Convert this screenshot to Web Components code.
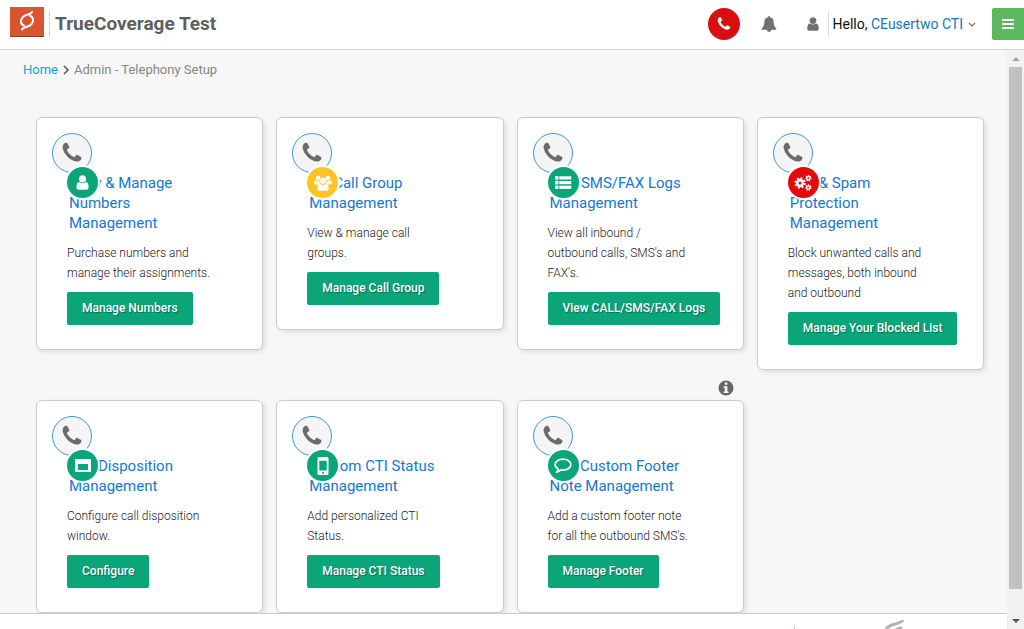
<!DOCTYPE html>
<html lang="en">
<head>
<meta charset="utf-8">
<title>Admin - Telephony Setup</title>
<style>
html, body { margin: 0; height: 100%; }
body { font-family: Roboto, "Liberation Sans", sans-serif; color: #333; background: #f7f7f7; overflow: hidden; }
</style>
</head>
<body>
<telephony-app></telephony-app>
<script>
const PHONE = '<path d="M1600 1240q0 27-10 70.5t-21 68.5q-21 50-122 106-94 51-186 51-27 0-52.5-3.5t-57.5-12.5-47.5-14.5-55.5-20.5-49-18q-98-35-175-83-128-79-264.5-215.5t-215.5-264.5q-48-77-83-175-3-9-18-49t-20.5-55.5-14.5-47.5-12.5-57.5-3.5-52.5q0-92 51-186 56-101 106-122 25-11 68.5-21t70.5-10q14 0 21 3 18 6 53 76 11 19 30 54t35 63.5 31 53.5q3 4 17.5 25t21.5 35.5 7 28.5q0 20-28.5 50t-62 55-62 53-28.5 46q0 9 5 22.5t8.500 20.5 14 24 11.5 19q76 137 174 235t235 174q2 1 19 11.5t24 14 20.5 8.500 22.5 5q18 0 46-28.500t53-62 55-62 50-28.500q14 0 28.500 7t35.500 21.500 25 17.500q25 15 53.500 31t63.500 35 54 30q70 35 76 53 3 7 3 21z"/>';
const USER = '<path d="M1536 1399q0 109-62.5 187t-150.5 78h-854q-88 0-150.5-78t-62.5-187q0-85 8.5-160.5t31.5-152 58.5-131 94-89 134.5-34.5q131 128 313 128t313-128q76 0 134.5 34.5t94 89 58.5 131 31.5 152 8.5 160.5zm-256-887q0 159-112.5 271.5t-271.5 112.5-271.5-112.5-112.5-271.5 112.5-271.5 271.5-112.5 271.5 112.5 112.5 271.5z"/>';
const gear = (x, y, r, w, teeth) => {
  const dash = 2 * Math.PI * r / (teeth * 2);
  return `<g fill="none" stroke="currentColor"><circle cx="${x}" cy="${y}" r="${r - w * 0.6}" stroke-width="${w}"/><circle cx="${x}" cy="${y}" r="${r}" stroke-width="${w}" stroke-dasharray="${dash}"/></g>`;
};
const ICONS = {
  phone: [1792, PHONE],
  user: [1792, USER],
  bell: [1792, '<path d="M912 1696q0-16-16-16-59 0-101.5-42.5t-42.5-101.5q0-16-16-16t-16 16q0 73 51.5 124.5t124.5 51.5q16 0 16-16zm816-288q0 52-38 90t-90 38h-448q0 106-75 181t-181 75-181-75-75-181h-448q-52 0-90-38t-38-90q50-42 91-88t85-119.5 74.5-158.5 50-206 19.5-260q0-152 117-282.5t307-158.5q-8-19-8-39 0-40 28-68t68-28 68 28 28 68q0 20-8 39 190 28 307 158.5t117 282.5q0 139 19.5 260t50 206 74.5 158.5 85 119.5 91 88z"/>'],
  menu: [16, '<rect x="2" y="3" width="12" height="2"/><rect x="2" y="7" width="12" height="2"/><rect x="2" y="11" width="12" height="2"/>'],
  group: [18, '<circle cx="4" cy="4" r="2.4"/><circle cx="14" cy="4" r="2.4"/><path d="M0 9.500q0-3.300 2-3.300 2 1.300 3.500.6-.6 2 .8 3.600H2Q0 10.500 0 9.500zM18 9.500q0-3.300-2-3.300-2 1.300-3.500.6.6 2-.8 3.600H16q2 .1 2-.9z"/><circle cx="9" cy="6.800" r="3.200"/><path d="M3.300 14.500q0-4.500 2.600-4.500 3.100 2 6.200 0 2.600 0 2.600 4.500 0 2.300-2.200 2.300h-7q-2.200 0-2.200-2.300z"/>'],
  list: [18, '<rect x="1" y="2" width="3.500" height="3.700" rx="1"/><rect x="1" y="6.700" width="3.500" height="3.700" rx="1"/><rect x="1" y="11.400" width="3.500" height="3.700" rx="1"/><rect x="5.300" y="2.300" width="12" height="3.200"/><rect x="5.300" y="7" width="12" height="3.200"/><rect x="5.300" y="11.700" width="12" height="3.200"/>'],
  cogs: [18, gear(6, 9, 4.4, 2.6, 8) + gear(14.3, 4.2, 2.5, 1.5, 7) + gear(14.3, 13.6, 2.5, 1.5, 7)],
  window: [18, '<path fill-rule="evenodd" d="M1 2h16v13H1zM4 7v6h10V7z"/>'],
  mobile: [18, '<path fill-rule="evenodd" d="M5 0h8q1.500 0 1.500 1.500v15q0 1.500-1.500 1.500H5q-1.500 0-1.500-1.500v-15Q3.500 0 5 0zM5.300 3.800v9.700h7.400V3.800zM9 14.900a1 1 0 1 0 0 2 1 1 0 0 0 0-2z"/>'],
  comment: [18, '<path fill="none" stroke="currentColor" stroke-width="1.700" stroke-linejoin="round" d="M9 2.200c4.500 0 7.900 2.400 7.900 5.400S13.500 13.100 9 13.100q-1 0-1.900-.15Q5.100 14.700 2.500 15.100q1.400-1.200 1.700-3.200C2.200 10.900 1.100 9.300 1.100 7.600 1.100 4.600 4.500 2.200 9 2.200z"/>'],
  info: [16, '<path fill-rule="evenodd" d="M8 .5a7.500 7.500 0 1 0 0 15 7.500 7.500 0 0 0 0-15zM6.700 2.600h2.700v2.100H6.700zM5.600 6.200h3.800v5.200h1.200v1.700h-5v-1.700h1.200V7.900H5.600z"/>'],
  right: [10, '<path fill="none" stroke="currentColor" stroke-width="1.500" d="M3 1l4 4-4 4"/>'],
  down: [10, '<path fill="none" stroke="currentColor" stroke-width="1.200" d="M2 4l3 3 3-3"/>']
};
const define = (name, markup, setup) => {
  const template = document.createElement('template');
  template.innerHTML = markup;
  customElements.define(name, class extends HTMLElement {
    constructor() {
      super();
      this.attachShadow({ mode: 'open' }).append(template.content.cloneNode(true));
    }
    connectedCallback() { if (setup) setup(this, this.shadowRoot); }
  });
};

define('ui-icon', `
<style>
:host { display: block; flex: none; width: 16px; height: 16px; }
svg { display: block; width: 100%; height: 100%; fill: currentColor; }
</style>
<svg aria-hidden="true"></svg>`, (host, root) => {
  const [size, shape] = ICONS[host.getAttribute('name')];
  const svg = root.querySelector('svg');
  svg.setAttribute('viewBox', `0 0 ${size} ${size}`);
  svg.innerHTML = shape;
});

define('brand-logo', `
<style>
:host { display: block; width: 34px; height: 30px; background: #db5430; box-sizing: border-box; border-bottom: 1px solid #8f3d2a; }
svg { display: block; }
</style>
<svg width="34" height="29" viewBox="0 0 34 29" fill="none" stroke="#fff" stroke-width="2" stroke-linecap="round" role="img" aria-label="Logo">
<path d="M22 5q-1 2-4 2.500c-5 1-7.500 4.500-7 7.500q.5 3 3 3.500"/><path d="M12 22.500q1-2 4-2.500c5-1 7.500-4.500 7-7.500q-.5-3-3-3.500"/>
</svg>`);

define('app-header', `
<style>
:host { display: flex; align-items: center; height: 48px; padding-bottom: 1px; background: #fff; border-bottom: 1px solid #d3d3d3; }
brand-logo { margin: 0 5px 4px 10px; }
h1 { margin: 0; padding-left: 5px; border-left: 1px solid #d8d8d8; font-size: 19px; line-height: 26px; font-weight: 700; color: #5f5f5f; }
.end { display: flex; align-items: center; margin-left: auto; color: #707070; }
button { border: 0; padding: 0; background: none; color: inherit; font: inherit; display: flex; align-items: center; justify-content: center; }
.call { width: 32px; height: 32px; border-radius: 50%; background: #d90e11; color: #fff; margin-right: 21px; }
.bell { margin-right: 28px; }
.person { margin-right: 7px; }
.hello { display: flex; align-items: center; gap: 4px; border-left: 1px solid #d5dde2; padding-left: 4px; height: 26px; font-size: 14px; color: #111; margin-right: 15px; white-space: nowrap; }
a { color: #1a74b8; text-decoration: none; }
.hello ui-icon { width: 10px; height: 10px; color: #a0605a; }
.menu { width: 32px; height: 32px; border-radius: 2px 0 0 2px; background: #5cb85c; color: #fff; }
</style>
<brand-logo></brand-logo>
<h1>TrueCoverage Test</h1>
<div class="end">
  <button class="call" aria-label="Call"><ui-icon name="phone"></ui-icon></button>
  <button class="bell" aria-label="Notifications"><ui-icon name="bell"></ui-icon></button>
  <button class="person" aria-label="Profile"><ui-icon name="user"></ui-icon></button>
  <div class="hello"><span>Hello, <a href="#user">CEusertwo CTI</a></span><ui-icon name="down"></ui-icon></div>
  <button class="menu" aria-label="Menu"><ui-icon name="menu"></ui-icon></button>
</div>`);

define('bread-crumb', `
<style>
:host { display: flex; align-items: center; gap: 3px; font-size: 13px; line-height: 20px; color: #858585; }
a { color: #199be0; text-decoration: none; }
ui-icon { width: 10px; height: 10px; color: #555; }
</style>
<a href="#home">Home</a><ui-icon name="right"></ui-icon><slot></slot>`);

define('setup-card', `
<style>
:host { display: block; position: relative; box-sizing: border-box; padding: 15px 15px 24px; background: #fff; border: 1px solid #ccc; border-radius: 6px; box-shadow: 2px 2px 5px rgba(0,0,0,.1); }
.phone { display: flex; align-items: center; justify-content: center; box-sizing: border-box; width: 40px; height: 40px; border: 1px solid #3c9ad8; border-radius: 50%; background: #f5f5f5; color: #6b6b6b; }
.phone ui-icon { width: 24px; height: 24px; }
.badge { position: absolute; left: 30px; top: 49px; display: flex; align-items: center; justify-content: center; width: 31px; height: 31px; border-radius: 50%; background: var(--badge, #0ba57a); color: #fff; box-shadow: 0 0 1px 2px #fff; }
.badge ui-icon { width: 18px; height: 18px; }
.badge ui-icon[name="user"] { width: 17px; height: 17px; }
.body { padding-left: 15px; }
h2 { margin: 0 0 10px; padding-left: 2px; max-width: 148px; font-size: 15px; line-height: 20px; font-weight: 400; color: #1577d1; }
p { margin: 0 0 9px; max-width: 144px; font-size: 12px; line-height: 20px; font-weight: 300; color: #222; }
button { display: block; height: 33px; padding: 0 15px; border: 0; border-radius: 2px; background: #0ba57a; color: #fff; font: 500 12px/33px Roboto, sans-serif; white-space: nowrap; text-shadow: 1px 1px 1px rgba(0,0,0,.35); }
.info { position: absolute; right: 9px; top: -21px; color: #666; }
</style>
<div class="phone"><ui-icon name="phone"></ui-icon></div>
<div class="body">
  <h2></h2>
  <p><slot></slot></p>
  <button></button>
</div>
<div class="badge"></div>`, (host, root) => {
  root.querySelector('h2').textContent = host.getAttribute('heading');
  root.querySelector('button').textContent = host.getAttribute('action');
  root.querySelector('.badge').innerHTML = `<ui-icon name="${host.getAttribute('icon')}"></ui-icon>`;
  if (host.hasAttribute('info')) root.querySelector('.badge').insertAdjacentHTML('afterend', '<ui-icon class="info" name="info"></ui-icon>');
});

define('card-grid', `
<style>
:host { display: grid; grid-template-columns: repeat(4, minmax(0, 1fr)); gap: 30px 13px; align-items: start; padding: 0 23px 0 36px; }
.yellow { --badge: #ffc423; }
.red { --badge: #e50a0a; }
</style>
<setup-card icon="user" heading="View &amp; Manage Numbers Management" action="Manage Numbers">Purchase numbers and manage their assignments.</setup-card>
<setup-card class="yellow" icon="group" heading="My Call Group Management" action="Manage Call Group">View &amp; manage call groups.</setup-card>
<setup-card icon="list" heading="Call/SMS/FAX Logs Management" action="View CALL/SMS/FAX Logs">View all inbound / outbound calls, SMS's and FAX's.</setup-card>
<setup-card class="red" icon="cogs" heading="Call &amp; Spam Protection Management" action="Manage Your Blocked List">Block unwanted calls and messages, both inbound and outbound</setup-card>
<setup-card icon="window" heading="Call Disposition Management" action="Configure">Configure call disposition window.</setup-card>
<setup-card icon="mobile" heading="Custom CTI Status Management" action="Manage CTI Status">Add personalized CTI Status.</setup-card>
<setup-card icon="comment" info heading="Add Custom Footer Note Management" action="Manage Footer">Add a custom footer note for all the outbound SMS's.</setup-card>`);

define('app-footer', `
<style>
:host { display: flex; justify-content: flex-end; align-items: flex-end; height: 15px; background: #fff; border-top: 1px solid #ccc; }
i { width: 1px; height: 4px; background: #d0c4c4; margin-right: 90px; }
svg { display: block; margin-right: 101px; }
</style>
<i></i>
<svg width="21" height="9" viewBox="0 0 21 9" fill="none" stroke="#b3b3b3" stroke-width="3"><path d="M1 9q2-3 9-5 7-1.500 8-4M11 10q1-2 6-2"/></svg>`);

define('scroll-rail', `
<style>
:host { display: flex; flex-direction: column; align-items: center; width: 17px; background: #f1f1f1; }
svg { display: block; flex: none; }
.thumb { width: 13px; flex: 1; background: #c1c1c1; }
.rest { height: 23px; }
</style>
<svg width="17" height="17"><path d="M5 11l4-4 4 4z" fill="#a3a3a3"/></svg>
<div class="thumb"></div><div class="rest"></div>
<svg width="17" height="17"><path d="M5 7h8l-4 4z" fill="#505050"/></svg>`);

define('telephony-app', `
<style>
:host { display: flex; flex-direction: column; height: 100vh; }
.work { flex: 1; min-height: 0; display: grid; grid-template-columns: minmax(0, 1fr) auto; }
.pane { display: flex; flex-direction: column; min-height: 0; }
main { flex: 1; min-height: 0; overflow: hidden; }
bread-crumb { padding: 10px 23px 37px; }
</style>
<app-header></app-header>
<div class="work">
  <div class="pane">
    <main><bread-crumb>Admin - Telephony Setup</bread-crumb><card-grid></card-grid></main>
    <app-footer></app-footer>
  </div>
  <scroll-rail></scroll-rail>
</div>`);
</script>
</body>
</html>
